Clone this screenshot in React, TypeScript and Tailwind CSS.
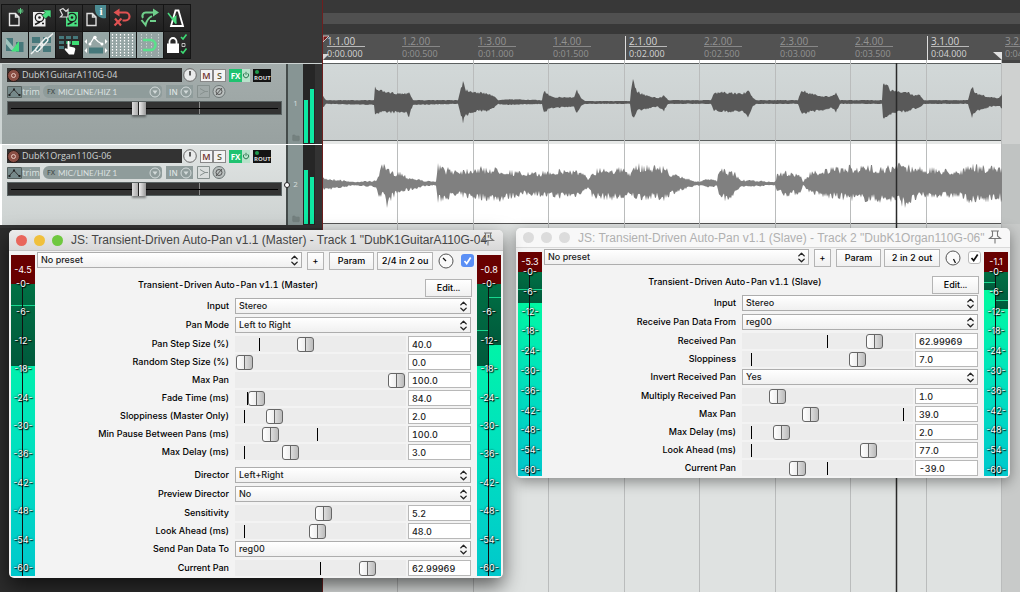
import { ReactNode } from 'react'
import { ChevronsUpDown, Folder } from 'lucide-react'

interface Track {
  id: number
  name: string
  selected: boolean
  levels: number[]
}

interface Param {
  label: string
  options?: string[]
  pos?: number
  tick?: number
  value?: string
  spaced?: boolean
}

interface Channel {
  dark: number
  peak: number
}

const tracks: Track[] = [
  { id: 1, name: 'DubK1GuitarA110G-04', selected: false, levels: [55, 68] },
  { id: 2, name: 'DubK1Organ110G-06', selected: true, levels: [68, 60] },
]

const beats = [
  { bar: '1.1.00', time: '0:00.000', main: true },
  { bar: '1.2.00', time: '0:00.500', main: false },
  { bar: '1.3.00', time: '0:01.000', main: false },
  { bar: '1.4.00', time: '0:01.500', main: false },
  { bar: '2.1.00', time: '0:02.000', main: true },
  { bar: '2.2.00', time: '0:02.500', main: false },
  { bar: '2.3.00', time: '0:03.000', main: false },
  { bar: '2.4.00', time: '0:03.500', main: false },
  { bar: '3.1.00', time: '0:04.000', main: true },
  { bar: '3.2.00', time: '0:04.500', main: false },
]

const masterParams: Param[] = [
  { label: 'Input', options: ['Stereo', 'Mono'] },
  { label: 'Pan Mode', options: ['Left to Right', 'Random'] },
  { label: 'Pan Step Size (%)', pos: 0.4, tick: 0.1, value: '40.0' },
  { label: 'Random Step Size (%)', pos: 0, value: '0.0' },
  { label: 'Max Pan', pos: 1, value: '100.0' },
  { label: 'Fade Time (ms)', pos: 0.08, tick: 0.02, value: '84.0' },
  { label: 'Sloppiness (Master Only)', pos: 0.2, tick: 0, value: '2.0' },
  { label: 'Min Pause Between Pans (ms)', pos: 0.17, tick: 0.48, value: '100.0' },
  { label: 'Max Delay (ms)', pos: 0.3, tick: 0, value: '3.0' },
  { label: 'Director', options: ['Left+Right', 'Left', 'Right'], spaced: true },
  { label: 'Preview Director', options: ['No', 'Yes'] },
  { label: 'Sensitivity', pos: 0.52, value: '5.2' },
  { label: 'Look Ahead (ms)', pos: 0.48, tick: 0, value: '48.0' },
  { label: 'Send Pan Data To', options: ['reg00', 'reg01'] },
  { label: 'Current Pan', pos: 0.81, tick: 0.5, value: '62.99969' },
]

const slaveParams: Param[] = [
  { label: 'Input', options: ['Stereo', 'Mono'] },
  { label: 'Receive Pan Data From', options: ['reg00', 'reg01'] },
  { label: 'Received Pan', pos: 0.81, tick: 0.5, value: '62.99969' },
  { label: 'Sloppiness', pos: 0.7, tick: 0, value: '7.0' },
  { label: 'Invert Received Pan', options: ['Yes', 'No'] },
  { label: 'Multiply Received Pan', pos: 0.17, value: '1.0' },
  { label: 'Max Pan', pos: 0.39, tick: 1, value: '39.0' },
  { label: 'Max Delay (ms)', pos: 0.2, tick: 0, value: '2.0' },
  { label: 'Look Ahead (ms)', pos: 0.77, tick: 0, value: '77.0' },
  { label: 'Current Pan', pos: 0.3, tick: 0.5, value: '-39.0' },
]

const scale = ['0', '6', '12', '18', '24', '30', '36', '42', '48', '54', '60']

// [x, amplitude above centre, amplitude below centre]
const guitarWave = [
  [0, 6, 6], [3, 2, 2], [51, 2, 3], [52, 15, 12], [62, 10, 11], [82, 9, 11], [86, 11, 15], [90, 2, 3],
  [135, 2, 2], [137, 12, 12], [140, 22, 21], [143, 13, 14], [155, 10, 9], [165, 9, 9], [170, 7, 7], [175, 2, 2],
  [182, 3, 3], [219, 2, 2], [221, 12, 12], [225, 8, 8], [232, 5, 6], [251, 5, 5], [254, 13, 12], [258, 4, 4],
  [262, 1, 2], [307, 1, 2], [308, 12, 10], [310, 22, 18], [314, 11, 9], [324, 7, 7], [335, 4, 5], [341, 7, 9],
  [345, 2, 2], [388, 2, 2], [391, 9, 9], [396, 10, 10], [420, 9, 10], [425, 12, 17], [430, 4, 4], [434, 2, 2],
  [475, 2, 2], [477, 9, 8], [480, 12, 13], [487, 9, 10], [500, 6, 9], [509, 6, 6], [513, 9, 11], [517, 2, 2],
  [559, 2, 2], [560, 18, 17], [561, 22, 18], [567, 13, 13], [577, 10, 10], [584, 11, 10], [591, 7, 7], [596, 8, 7],
  [601, 2, 2], [645, 2, 2], [647, 10, 9], [649, 16, 16], [653, 9, 10], [667, 5, 5], [676, 4, 4], [679, 9, 7],
]

const organWave = [
  [0, 6, 7], [17, 4, 5], [29, 2, 2], [53, 3, 4], [57, 15, 18], [60, 20, 14], [64, 16, 26], [69, 12, 15],
  [77, 13, 10], [85, 7, 8], [102, 3, 3], [111, 2, 2], [113, 3, 3], [115, 20, 21], [122, 16, 16], [137, 15, 14],
  [152, 17, 16], [177, 16, 18], [197, 12, 13], [212, 11, 12], [227, 14, 15], [252, 15, 14], [262, 9, 8], [265, 4, 4],
  [269, 13, 14], [277, 17, 16], [297, 16, 17], [309, 12, 14], [313, 20, 16], [341, 18, 17], [349, 10, 11], [367, 5, 5],
  [373, 2, 2], [387, 5, 4], [394, 3, 3], [396, 15, 12], [402, 14, 18], [412, 12, 12], [417, 4, 4], [435, 3, 3],
  [447, 2, 2], [452, 2, 2], [454, 9, 8], [462, 13, 13], [477, 10, 11], [480, 2, 2], [487, 12, 10], [502, 15, 15],
  [527, 18, 17], [557, 18, 19], [574, 18, 19], [577, 23, 21], [582, 20, 24], [597, 17, 15], [617, 15, 14], [637, 14, 15],
  [652, 20, 22], [657, 18, 19], [677, 17, 17], [679, 21, 21],
]

function wavePath(points: number[][], centre: number, jitter: number) {
  let seed = 7
  const noise = () => {
    seed = (seed * 16807) % 2147483647
    return seed / 2147483647
  }
  const top: string[] = []
  const bottom: string[] = []
  let i = 0
  for (let x = 0; x <= 679; x++) {
    while (i < points.length - 2 && points[i + 1][0] <= x) i++
    const [x0, t0, b0] = points[i]
    const [x1, t1, b1] = points[i + 1]
    const k = (x - x0) / (x1 - x0)
    const t = (t0 + (t1 - t0) * k) * (1.05 - jitter * noise())
    const b = (b0 + (b1 - b0) * k) * (1.05 - jitter * noise())
    top.push(`${x},${(centre - t).toFixed(1)}`)
    bottom.unshift(`${x},${(centre + b).toFixed(1)}`)
  }
  return `M${top.join('L')}L${bottom.join('L')}Z`
}

const toolbar: { label: string; on: boolean; art: ReactNode }[] = [
  {
    label: 'New project',
    on: false,
    art: (
      <>
        <path d="M7.500 8.500h6l3.500 3.500v8.500h-9.500zM13.500 8.500v3.500h3.500" fill="none" stroke="#e6e6e6" strokeWidth="1.400" />
        <path d="M18.500 3v6M15.500 6h6M16.500 4l4 4M20.500 4l-4 4" stroke="#5ecb83" strokeWidth="1" />
      </>
    ),
  },
  {
    label: 'Open project',
    on: false,
    art: (
      <>
        <path d="M4 7h12.500v14.500h-12.500z" fill="#eee" />
        <circle cx="10.500" cy="12.500" r="4.200" fill="none" stroke="#1d1d1d" strokeWidth="1.300" />
        <circle cx="10.500" cy="12.500" r="1.300" fill="#1d1d1d" />
        <path d="M6 19.500l5-2.500M13 18.500h2" stroke="#1d1d1d" strokeWidth="1.600" />
        <path d="M13 10.500l3-3-2-2.500h8v8l-2.500-2-3 3z" fill="#4ade80" stroke="#1d1d1d" strokeWidth="0.600" />
      </>
    ),
  },
  {
    label: 'Save project',
    on: false,
    art: (
      <>
        <path d="M10 7h12v14.500h-12z" fill="#4ade80" />
        <circle cx="16" cy="12.500" r="4.200" fill="none" stroke="#1d1d1d" strokeWidth="1.300" />
        <circle cx="16" cy="12.500" r="1.300" fill="#1d1d1d" />
        <path d="M11.500 19.500l5-2.500M18.500 18.500h2" stroke="#1d1d1d" strokeWidth="1.600" />
        <path d="M4 5l3-1.500 3 3 2-2v7.500h-7.500l2-2z" fill="#2b2b2b" stroke="#ddd" strokeWidth="1.200" />
      </>
    ),
  },
  {
    label: 'Project settings',
    on: false,
    art: (
      <>
        <path d="M4 8.500h5.500l3.500 3.500v8.500h-9zM9.500 8.500v3.500h3.500" fill="none" stroke="#ddd" strokeWidth="1.400" />
        <path d="M12 0h11v13a9 9 0 0 1-11-9z" fill="#4b8b92" />
        <text x="18" y="10" textAnchor="middle" fontSize="11" fontFamily="Liberation Serif, serif" fontWeight="bold" fill="#fff">i</text>
      </>
    ),
  },
  {
    label: 'Undo',
    on: false,
    art: (
      <>
        <path d="M8 7.500h7.500a4 4 0 0 1 0 8h-3" fill="none" stroke="#e05252" strokeWidth="2.200" />
        <path d="M9.500 3.500v8l-6-4z" fill="#e05252" />
        <path d="M5 13.500l6 7M11.500 13.500l-7 7" stroke="#e05252" strokeWidth="2.200" />
      </>
    ),
  },
  {
    label: 'Redo',
    on: false,
    art: (
      <>
        <path d="M17 7.500h-8a3.500 3.500 0 0 0-3 5.500" fill="none" stroke="#6fd08b" strokeWidth="2.200" />
        <path d="M16 3.500v8l6-4z" fill="#6fd08b" />
        <path d="M4.500 15l4 5c1-5 3-7 6.500-9M13 16h6" fill="none" stroke="#6fd08b" strokeWidth="2" />
      </>
    ),
  },
  {
    label: 'Metronome',
    on: false,
    art: (
      <>
        <path d="M11.500 5.500h3l4.500 15.500h-12z" fill="none" stroke="#fff" strokeWidth="1.800" />
        <path d="M4 8l8 10.500" stroke="#4ade80" strokeWidth="1.500" />
        <path d="M12.500 10v9l-5-5z" fill="#4ade80" />
      </>
    ),
  },
  {
    label: 'Auto crossfade',
    on: true,
    art: (
      <>
        <path d="M4 6h7v13h-7zM14 10h7.500v10h-7.500z" fill="#46787b" />
        <path d="M4 6l10 12h-5l-5-6z" fill="#9fc4bd" />
        <path d="M17 9v10.500h-8z" fill="#44e07c" />
      </>
    ),
  },
  {
    label: 'Item grouping',
    on: true,
    art: (
      <>
        <path d="M3 5h8v6h-8zM14 5h8v6h-8zM3 14h8v6h-8zM14 14h8v6h-8z" fill="#46787b" />
        <path d="M2 22l6-6M7 16.500l4-4.500c1.500-1.500 4 .5 2.500 2.500l-4 4.500c-2 1.500-4-.5-2.500-2.500zM12 11l4-4.500c1.500-1.500 4 .5 2.500 2.500l-4 4.500c-2 1.500-4-.5-2.500-2.500zM18 7l6-5.500" fill="none" stroke="#eef2f1" strokeWidth="1.500" />
      </>
    ),
  },
  {
    label: 'Ripple editing',
    on: false,
    art: (
      <>
        <path d="M3 4h5v3h-5zM10 4h5v3h-5zM17 4h5v3h-5zM3 9h5v3h-5zM3 14h5v3h-5z" fill="#46787b" />
        <path d="M10 9h5v3h-5z" fill="#2f9f69" />
        <path d="M16 9h7v4h-7z" fill="#3ddc74" />
        <path d="M11.500 10c0-1.500 2-1.500 2 0v4.500l4.500 1c1.500.5 1.500 2 1 3l-1 4h-5l-4-4.500c-1-1.500.5-2.500 2.500-1z" fill="#fff" />
      </>
    ),
  },
  {
    label: 'Move envelope points',
    on: true,
    art: (
      <>
        <path d="M7 12l4-6.500 4 4 4 2.500" fill="none" stroke="#fff" strokeWidth="1.200" />
        <circle cx="7" cy="12" r="1.500" fill="#fff" />
        <circle cx="12" cy="5.500" r="1.700" fill="#fff" />
        <circle cx="19" cy="12" r="1.500" fill="#fff" />
        <path d="M4 7v5l-2.500-2.500zM22 7v5l2.500-2.500zM4 16v5l-2.500-2.500zM22 16v5l2.500-2.500z" fill="#fff" />
        <path d="M6 15.500h14v6h-14z" fill="#46787b" />
      </>
    ),
  },
  {
    label: 'Grid lines',
    on: true,
    art: (
      <path d="M2.500 2v22M6.500 2v22M10.500 2v22M14.500 2v22M18.500 2v22M22.500 2v22" stroke="#fff" strokeWidth="1.200" strokeDasharray="1.500 1.500" />
    ),
  },
  {
    label: 'Snap',
    on: true,
    art: (
      <>
        <path d="M4.500 2v22M9.500 2v22M14.500 2v22M21.500 2v22" stroke="#d5dddc" strokeWidth="0.800" strokeDasharray="1.500 1.500" />
        <path d="M6 8h7.500a5 5 0 0 1 0 10h-7.500" fill="none" stroke="#5be08c" strokeWidth="2.600" />
      </>
    ),
  },
  {
    label: 'Locking',
    on: false,
    art: (
      <>
        <path d="M5.500 12v-2.500a3.500 3.500 0 0 1 7 0v2.500" fill="none" stroke="#fff" strokeWidth="1.800" />
        <path d="M3 11.500h12v9.500h-12z" fill="#fff" />
        <path d="M18 11.500h3v3h-3z" fill="none" stroke="#ddd" strokeWidth="0.800" />
        <path d="M17 5l2 2 3.500-4.500M17 19l2 2 3.500-4.500" fill="none" stroke="#3ddc74" strokeWidth="1.600" />
      </>
    ),
  },
]

function Toolbar() {
  return (
    <div className="ml-px mt-1 grid w-max grid-cols-7 gap-px bg-[#151515] p-px">
      {toolbar.map((tool) => (
        <button
          key={tool.label}
          aria-label={tool.label}
          className={
            tool.on
              ? 'h-[26px] w-[26px] bg-[#95a5a4]'
              : 'h-[26px] w-[26px] bg-linear-to-b from-[#303030] to-[#202020]'
          }
        >
          <svg viewBox="0 0 26 26" className="h-[26px] w-[26px]">{tool.art}</svg>
        </button>
      ))}
    </div>
  )
}

function RoundArrow() {
  return (
    <svg viewBox="0 0 12 12" className="h-3 w-3 shrink-0">
      <circle cx="6" cy="6" r="5" fill="none" stroke="#d3dada" />
      <path d="M3.500 4.500h5l-2.500 3.500z" fill="#d3dada" />
    </svg>
  )
}

function TrackPanel({ track }: { track: Track }) {
  return (
    <section
      aria-label={track.name}
      className={
        track.selected
          ? 'flex h-[81px] border-l-2 border-t border-white bg-linear-to-b from-[#e0e4e3] to-[#cdd2d1]'
          : 'flex h-[81px] border-l-2 border-t border-[#cdd4d3] bg-linear-to-b from-[#a4adac] to-[#98a1a0]'
      }
    >
      <div className="flex w-[284px] shrink-0 flex-col gap-[3px] pl-[5px] pt-1">
        <div className="flex h-[14px] items-center">
          <div className="flex h-[14px] w-[175px] items-center gap-[2px] bg-[#333]">
            <button aria-label="Record arm" className="flex h-[13px] w-[13px] items-center justify-center rounded-full border border-[#2a1a17] bg-[#8a4f45]">
              <span className="h-[5px] w-[5px] rounded-full border border-[#e8c9c2]" />
            </button>
            <span className="text-[9px] leading-[14px] text-[#d0d3d3]">{track.name}</span>
          </div>
          <svg viewBox="0 0 14 14" className="ml-px h-[14px] w-[14px]">
            <circle cx="7" cy="7" r="6.300" fill="#e9ebeb" stroke="#666" />
            <path d="M7 3v4.500" stroke="#222" strokeWidth="1.400" />
          </svg>
          <button className="ml-[3px] h-[13px] w-[13px] border border-[#888] bg-[#f3f3f3] text-[9px] font-semibold leading-[11px] text-[#6d2f2a]">M</button>
          <button className="h-[13px] w-[13px] border border-[#888] bg-[#f3f3f3] text-[9px] font-semibold leading-[11px] text-[#5f5a35]">S</button>
          <button className="ml-[3px] h-[13px] w-[13px] bg-[#1fc270] text-[8px] font-bold leading-[13px] text-white">FX</button>
          <button aria-label="Bypass FX" className="flex h-[13px] w-2 items-center justify-center bg-[#b9e2cb]">
            <svg viewBox="0 0 8 8" className="h-2 w-2">
              <path d="M2.300 2.200a2.600 2.600 0 1 0 3.400 0M4 .8v3" fill="none" stroke="#2c7a50" strokeWidth="1" />
            </svg>
          </button>
          <button className="ml-[3px] flex h-[13px] w-[18px] flex-col justify-between bg-[#141414] p-px">
            <span className="ml-px h-1 w-1 rounded-full bg-[#1e9b4d]" />
            <span className="w-full text-center text-[6px] font-bold leading-[6px] text-[#ddd]">ROUT</span>
          </button>
        </div>
        <div className="flex h-[13px] items-center text-[#dce2e1]">
          <svg viewBox="0 0 15 12" className="h-3 w-[15px]">
            <path d="M.5.500h14v11h-14z" fill="#76898a" stroke="#56615f" />
            <path d="M2 9l5-5.500 5 5.500" fill="none" stroke="#333" />
            <path d="M1.500 8h2v2h-2zM6 2.500h2v2h-2zM11.500 8h2v2h-2z" fill="#222" />
          </svg>
          <button className="h-3 w-[18px] bg-[#8d9b9a] text-[9px] leading-3">trim</button>
          <div className="ml-[3px] flex h-[13px] w-[119px] items-center rounded-l-md rounded-r-sm bg-[#8f9c9b] pl-1 pr-px">
            <span className="w-[11px] text-[7px] font-semibold leading-3 text-[#46504f]">FX</span>
            <span className="flex-1 font-['Lato',sans-serif] text-[8px] leading-3">MIC/LINE/HIZ 1</span>
            <RoundArrow />
          </div>
          <div className="ml-1 flex h-[13px] w-[27px] items-center justify-between bg-[#8f9c9b] pl-[3px] pr-px">
            <span className="text-[8px] font-semibold leading-3">IN</span>
            <RoundArrow />
          </div>
          <svg viewBox="0 0 30 14" className="ml-1 h-[14px] w-[30px]">
            <path d="M.500.500h12v12h-12z" fill="none" stroke="#87918f" />
            <path d="M3 3.500l5 3-5 3M8 6.500h3" fill="none" stroke="#87918f" />
            <circle cx="22" cy="6.500" r="6" fill="#b9bfbe" stroke="#6d7676" />
            <circle cx="22" cy="6.500" r="3" fill="none" stroke="#555" />
            <path d="M19 10l6-7" stroke="#555" />
          </svg>
        </div>
        <div className="grid h-[14px] w-[275px] border border-[#5b6464] bg-[#333] bg-[linear-gradient(90deg,transparent_191px,#8a8a8a_191px,#8a8a8a_192px,transparent_192px)]">
          <span className="mx-[3px] h-px self-center bg-black [grid-area:1/1]" />
          <input
            type="range"
            aria-label={`${track.name} volume`}
            min={0}
            max={100}
            defaultValue={48}
            className="h-3 w-full appearance-none bg-transparent [grid-area:1/1] [&::-webkit-slider-thumb]:h-[13px] [&::-webkit-slider-thumb]:w-[14px] [&::-webkit-slider-thumb]:appearance-none [&::-webkit-slider-thumb]:bg-[linear-gradient(90deg,#ddd,#aaa_43%,#222_43%,#222_50%,#eee_50%,#999)] [&::-webkit-slider-thumb]:shadow-[0_2px_2px_rgba(0,0,0,0.4)]"
          />
        </div>
      </div>
      <div className="relative flex w-[17px] shrink-0 flex-col items-center border-l-2 border-[#444b4a] bg-[#879594] text-[#d6dddc]">
        {track.selected && (
          <span className="absolute -left-1 top-[37px] h-[6px] w-[6px] rounded-full border border-[#222] bg-white" />
        )}
        <span className="mt-[33px] text-[8px] leading-3">{track.id}</span>
        <Folder size={8} className="mb-[2px] mt-auto fill-[#74817f] text-[#74817f]" />
      </div>
      <div className="flex w-3 shrink-0 items-end gap-[2px] bg-[#262626] pb-px pl-px">
        {track.levels.map((level, i) => (
          <span key={i} className="w-1 bg-[#0eeaa4]" style={{ height: `${level}%` }} />
        ))}
      </div>
      <div className="flex-1 bg-[#333]" />
    </section>
  )
}

function RulerLabel({ bar, time, main }: { bar: string; time: string; main: boolean }) {
  return (
    <div className={main ? 'w-[38px] shrink-0 text-[#d4d4d4]' : 'w-[38px] shrink-0 text-[#939393]'}>
      <div className={main ? 'h-[11px] border-b border-[#b9b9b9] text-[10px] leading-[11px]' : 'h-[11px] border-b border-[#878787] text-[10px] leading-[10px]'}>
        {bar}
      </div>
      <div className="mt-px text-[9px] leading-3">{time}</div>
    </div>
  )
}

function Ruler() {
  return (
    <div className="relative grid h-[26px] grid-cols-[75px_76px_75px_76px_75px_76px_75px_76px_1fr] overflow-x-clip bg-[#525252]">
      {beats.slice(0, 9).map((b, i) => (
        <div key={b.bar} className={b.main && i > 0 ? 'mt-[2px] flex border-l border-[#ddd] pl-[3px]' : 'mt-[2px] flex pl-1'}>
          <RulerLabel {...b} />
          {i === 8 && (
            <div className="ml-9 shrink-0">
              <RulerLabel {...beats[9]} />
            </div>
          )}
        </div>
      ))}
      <svg viewBox="0 0 8 26" className="absolute left-0 top-0 h-[26px] w-2">
        <path d="M0 2h6l-6 6z" fill="#7a1a1a" stroke="#ddd" strokeWidth="0.800" />
        <path d="M0 20h6l-6 6z" fill="#d8d8d8" />
      </svg>
      <svg viewBox="0 0 9 8" className="absolute bottom-0 left-[670px] h-2 w-[9px]">
        <path d="M0 0h9v8z" fill="#e2e2e2" />
      </svg>
    </div>
  )
}

function ArrangeView() {
  return (
    <main className="flex min-w-0 flex-1 flex-col border-l border-[#6d1f1f] bg-[#383838]">
      <div className="mt-[13px] h-[11px] bg-[#505050]" />
      <div className="mt-[10px]">
        <Ruler />
      </div>
      <div className="grid flex-1 grid-cols-1">
        <div className="grid grid-cols-[679px_1fr] grid-rows-[3px_81px_80px_1fr] [grid-area:1/1]">
          <div className="bg-white" />
          <div className="bg-[#444]" />
          <div className="border-b-4 border-[#e6e8e7]">
            <div className="h-[78px] border-y border-[#5c6060] bg-linear-to-b from-[#d2d8d8] to-[#c9cece]" />
          </div>
          <div className="bg-[#cfd1d0]" />
          <div className="border-b border-r border-[#555] bg-white" />
          <div className="bg-[#c0c3c2]" />
          <div className="bg-[#dfe2e1]" />
          <div className="bg-[#c8cac9]" />
        </div>
        <div className="grid grid-cols-[75px_76px_75px_76px_75px_76px_75px_76px_75px_1fr] [grid-area:1/1]">
          {beats.map((b) => (
            <div key={b.bar} className="border-r border-[#babcbc] last:border-r-0" />
          ))}
        </div>
        <svg viewBox="0 0 697 532" className="h-[532px] w-[697px] [grid-area:1/1]">
          <path d={wavePath(guitarWave, 42, 0.25)} fill="#595959" />
          <path d={wavePath(organWave, 123.5, 0.5)} fill="#808080" />
          <path d="M573.500 3v529" stroke="#2a2a2a" strokeWidth="1.500" />
        </svg>
      </div>
    </main>
  )
}

function Meter({ peak, tall, channels }: { peak: string; tall: boolean; channels: Channel[] }) {
  return (
    <div className="mb-[2px] mt-1 flex w-6 shrink-0 flex-col text-[9px] text-white">
      <div className={tall ? 'flex h-[29px] items-center justify-center bg-[#680000]' : 'flex h-5 items-center justify-center bg-[#680000]'}>
        {peak}
      </div>
      <div className="grid flex-1 grid-cols-1">
        <div className="grid grid-cols-[12px_12px] bg-linear-to-b from-[#00ff96] via-[#00e4bc] to-[#00c8cc] [grid-area:1/1]">
          {channels.map((c, i) => (
            <div key={i} className="border-r border-[#101010] last:border-r-0">
              <div className="flex flex-col bg-linear-to-b from-[#007044] to-[#005a3c]" style={{ height: `${c.dark}%` }}>
                <span className="h-px bg-[#18d890]" style={{ marginTop: c.peak }} />
              </div>
            </div>
          ))}
        </div>
        <div className={tall ? '-mt-[6px] mb-[2px] flex flex-col justify-between [grid-area:1/1]' : '-mt-[6px] flex flex-col justify-between [grid-area:1/1]'}>
          {scale.map((s) => (
            <span key={s} className="text-center leading-3 [text-shadow:0_0_2px_#000,1px_1px_1px_#000]">
              -{s}-
            </span>
          ))}
        </div>
      </div>
    </div>
  )
}

function Select({ id, label, options }: { id: string; label?: string; options: string[] }) {
  return (
    <div className="relative h-4 min-w-0 flex-1">
      <select
        id={id}
        aria-label={label}
        className="block h-4 w-full appearance-none border border-[#adadad] bg-linear-to-b from-white to-[#f0f0f0] pl-[3px] text-[9px] leading-3 text-[#222]"
      >
        {options.map((o) => (
          <option key={o}>{o}</option>
        ))}
      </select>
      <ChevronsUpDown size={13} strokeWidth={2.5} className="pointer-events-none absolute right-px top-[2px] text-[#222]" />
    </div>
  )
}

function ParamRow({ prefix, param }: { prefix: string; param: Param }) {
  const id = `${prefix}-${param.label.toLowerCase().replace(/[^a-z]+/g, '-')}`
  return (
    <div className={param.options ? (param.spaced ? 'mt-[5px] flex h-[19px]' : 'flex h-[19px]') : 'flex h-[18px]'}>
      <label htmlFor={id} className="flex-1 pr-[6px] text-right leading-4">
        {param.label}
      </label>
      <div className="flex w-[236px] gap-[2px]">
        {param.options ? (
          <Select id={id} options={param.options} />
        ) : (
          <>
            <div className="relative h-4 flex-1 bg-[#ececec] px-px">
              {param.tick !== undefined && (
                <span className="absolute top-[2px] h-[13px] w-px bg-black" style={{ left: 9 + param.tick * 152 }} />
              )}
              <input
                id={id}
                type="range"
                min={0}
                max={1}
                step={0.01}
                defaultValue={param.pos}
                className="relative block h-4 w-full appearance-none bg-transparent [&::-webkit-slider-thumb]:h-[15px] [&::-webkit-slider-thumb]:w-[17px] [&::-webkit-slider-thumb]:appearance-none [&::-webkit-slider-thumb]:rounded-[3px] [&::-webkit-slider-thumb]:border [&::-webkit-slider-thumb]:border-[#666] [&::-webkit-slider-thumb]:bg-[linear-gradient(90deg,#fff,#eee_47%,#666_47%,#666_53%,#ddd_53%,#bbb)]"
              />
            </div>
            <input
              aria-label={`${param.label} value`}
              defaultValue={param.value}
              className="h-4 w-[63px] border border-[#b8b8b8] bg-white pl-[3px] leading-3 text-[#222]"
            />
          </>
        )}
      </div>
    </div>
  )
}

interface FxWindowProps {
  id: string
  className: string
  active: boolean
  title: string
  name: string
  io: string
  params: Param[]
  left: { peak: string; channels: Channel[] }
  right: { peak: string; channels: Channel[] }
}

function FxWindow({ id, className, active, title, name, io, params, left, right }: FxWindowProps) {
  const btn = 'h-[18px] border border-[#b4b4b4] bg-linear-to-b from-white to-[#f0f0f0] leading-4'
  return (
    <section aria-label={name} className={className}>
      <header
        className={
          active
            ? 'flex h-[21px] items-center gap-[7px] rounded-t-[5px] border-b border-[#c4c4c4] bg-linear-to-b from-[#ececec] to-[#d8d8d8] px-[7px] text-[#454545]'
            : 'flex h-5 items-center gap-[7px] rounded-t-[5px] border-b border-[#dadada] bg-[#f8f8f8] px-[7px] text-[#b0b0b0]'
        }
      >
        <button aria-label="Close" className={active ? 'h-[11px] w-[11px] shrink-0 rounded-full bg-[#e9665c]' : 'h-[11px] w-[11px] shrink-0 rounded-full bg-[#dcdcdc]'} />
        <button aria-label="Minimize" className={active ? 'h-[11px] w-[11px] shrink-0 rounded-full bg-[#f0c03c]' : 'h-[11px] w-[11px] shrink-0 rounded-full bg-[#dcdcdc]'} />
        <button aria-label="Zoom" className={active ? 'h-[11px] w-[11px] shrink-0 rounded-full bg-[#6fc83f]' : 'h-[11px] w-[11px] shrink-0 rounded-full bg-[#dcdcdc]'} />
        <h2 className="ml-px flex-1 whitespace-nowrap font-['Liberation_Sans',sans-serif] text-[12px] leading-4">{title}</h2>
        <button aria-label="Pin" className="absolute right-2 top-[2px]">
          <svg viewBox="0 0 14 14" className="h-[14px] w-[14px]">
            <path d="M3 1h8M4.500 1v5l-3 2.500h11l-3-2.500v-5M7 8.500v5" fill="none" stroke="#777" strokeWidth="1.100" />
          </svg>
        </button>
      </header>
      <div className="flex gap-[2px] px-[2px]">
        <Meter peak={left.peak} tall={active} channels={left.channels} />
        <div className="min-w-0 flex-1 pt-px text-[9px] font-medium tabular-nums text-black">
          <div className="flex h-[18px]">
            <Select id={`${id}-preset`} label="Preset" options={['No preset']} />
            <button className={`${btn} ml-[5px] w-[17px]`}>+</button>
            <button className={`${btn} ml-[5px] w-[45px]`}>Param</button>
            <button className={`${btn} ml-[3px] w-14 whitespace-nowrap`}>{io}</button>
            <svg viewBox="0 0 16 16" className="ml-[5px] mt-px h-4 w-4">
              <circle cx="8" cy="8" r="7" fill="#fafafa" stroke="#555" />
              <path d={active ? 'M8 8l-3-3' : 'M8.500 9l2 4'} stroke="#111" strokeWidth="1.300" />
            </svg>
            <label className="ml-[7px] mr-px mt-[2px] grid h-[13px] w-[13px]">
              <input
                type="checkbox"
                defaultChecked
                aria-label="Enabled"
                className={
                  active
                    ? 'h-[13px] w-[13px] appearance-none rounded-[3px] bg-[#5a8ff5] [grid-area:1/1]'
                    : 'h-[13px] w-[13px] appearance-none rounded-[3px] border border-[#bbb] bg-white [grid-area:1/1]'
                }
              />
              <svg viewBox="0 0 13 13" className="pointer-events-none h-[13px] w-[13px] [grid-area:1/1]">
                <path d="M3.500 7l2.200 2.500 4-6" fill="none" stroke={active ? '#fff' : '#111'} strokeWidth="1.700" />
              </svg>
            </label>
          </div>
          <div className="mr-[3px] mt-[9px] flex h-[19px] gap-[6px]">
            <h3 className="flex-1 text-center leading-[11px]">{name}</h3>
            <button className={`${btn} w-[47px]`}>Edit...</button>
          </div>
          <div className="mr-1">
            {params.map((p) => (
              <ParamRow key={p.label} prefix={id} param={p} />
            ))}
          </div>
        </div>
        <Meter peak={right.peak} tall={active} channels={right.channels} />
      </div>
    </section>
  )
}

export default function App() {
  return (
    <div className="relative flex min-h-screen overflow-hidden bg-[#2e2e2e] font-['Open_Sans','Noto_Sans',sans-serif]">
      <aside className="flex w-[322px] shrink-0 flex-col bg-[#383838]">
        <Toolbar />
        <div className="mt-1 flex flex-col bg-[#333] pb-[3px]">
          {tracks.map((t) => (
            <TrackPanel key={t.id} track={t} />
          ))}
        </div>
        <div className="flex-1 bg-[#2c2c2c]" />
      </aside>
      <ArrangeView />
      <FxWindow
        id="slave"
        className="absolute left-[516px] top-[228px] w-[494px] rounded-[5px] bg-[#f3f3f3] font-['Inter',sans-serif] shadow-[0_4px_14px_rgba(0,0,0,0.4)]"
        active={false}
        title={'JS: Transient-Driven Auto-Pan v1.1 (Slave) - Track 2 "DubK1Organ110G-06"'}
        name="Transient-Driven Auto-Pan v1.1 (Slave)"
        io="2 in 2 out"
        params={slaveParams}
        left={{ peak: '-5.3', channels: [{ dark: 15, peak: 17 }, { dark: 15, peak: 17 }] }}
        right={{ peak: '-1.1', channels: [{ dark: 9, peak: 10 }, { dark: 18, peak: 28 }] }}
      />
      <FxWindow
        id="master"
        className="absolute left-[9px] top-[230px] w-[494px] rounded-[5px] bg-[#f3f3f3] font-['Inter',sans-serif] shadow-[0_8px_20px_rgba(0,0,0,0.6)]"
        active
        title={'JS: Transient-Driven Auto-Pan v1.1 (Master) - Track 1 "DubK1GuitarA110G-04"'}
        name="Transient-Driven Auto-Pan v1.1 (Master)"
        io="2/4 in 2 ou"
        params={masterParams}
        left={{ peak: '-4.5', channels: [{ dark: 28, peak: 21 }, { dark: 28, peak: 21 }] }}
        right={{ peak: '-0.8', channels: [{ dark: 28, peak: 46 }, { dark: 21, peak: 13 }] }}
      />
    </div>
  )
}
